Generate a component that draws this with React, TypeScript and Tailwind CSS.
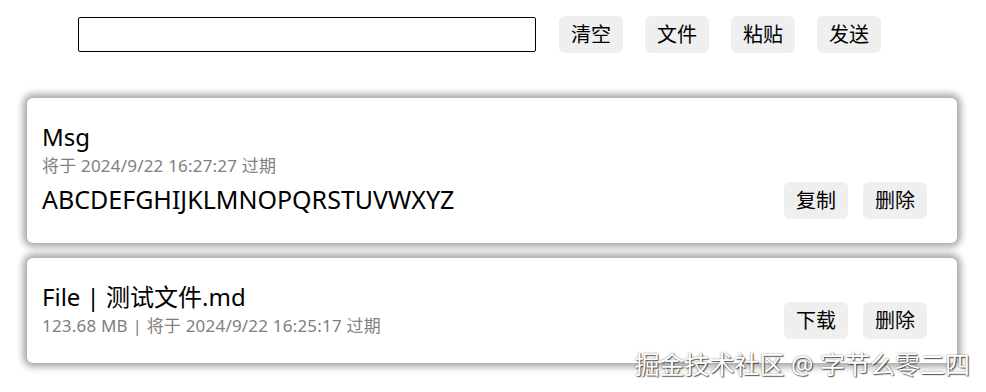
const font = "font-['Noto_Sans','Noto_Sans_CJK_SC',sans-serif]";

const Btn = ({ label }: { label: string }) => (
  <button className="h-[37px] w-[64px] rounded-md bg-[#efefef] text-[20px] leading-none text-black">
    {label}
  </button>
);

type Item = {
  title: string;
  sub: string;
  body?: string;
  actions: string[];
};

const items: Item[] = [
  {
    title: 'Msg',
    sub: '将于 2024/9/22 16:27:27 过期',
    body: 'ABCDEFGHIJKLMNOPQRSTUVWXYZ',
    actions: ['复制', '删除'],
  },
  {
    title: 'File | 测试文件.md',
    sub: '123.68 MB | 将于 2024/9/22 16:25:17 过期',
    actions: ['下载', '删除'],
  },
];

export default function App() {
  return (
    <div className={`relative w-[986px] h-[392px] bg-white overflow-hidden ${font}`}>
      {/* toolbar */}
      <div className="flex items-center gap-[22px] pl-[78px] pt-4">
        <input className="w-[458px] h-[35px] mr-px border border-black rounded-[2px] outline-none px-2" />
        {['清空', '文件', '粘贴', '发送'].map((b) => (
          <Btn key={b} label={b} />
        ))}
      </div>

      {/* list */}
      <div className="flex flex-col gap-[15px] mt-[45px] ml-[27px] w-[930px]">
        {items.map((it) => (
          <div
            key={it.title}
            className="flex items-end justify-between bg-white rounded-md shadow-[0_0_7px_4px_rgba(0,0,0,0.35)] pl-[15px] pr-[30px] pt-[23px] pb-6"
          >
            <div className="flex flex-col">
              <div className="text-[24px] leading-[32px] text-black">{it.title}</div>
              <div className="text-[17px] leading-[26px] tracking-[0.2px] text-[#808080]">{it.sub}</div>
              {it.body && (
                <div className="text-[25px] leading-[40px] text-black">{it.body}</div>
              )}
            </div>
            <div className="flex gap-[15px]">
              {it.actions.map((a) => (
                <Btn key={a} label={a} />
              ))}
            </div>
          </div>
        ))}
      </div>

      <div className="absolute right-[16px] top-[347px] text-[25px] leading-[34px] text-white [text-shadow:1px_1px_1px_rgba(0,0,0,0.6),0_0_2px_rgba(0,0,0,0.5)]">
        掘金技术社区 @ 字节么零二四
      </div>
    </div>
  );
}
